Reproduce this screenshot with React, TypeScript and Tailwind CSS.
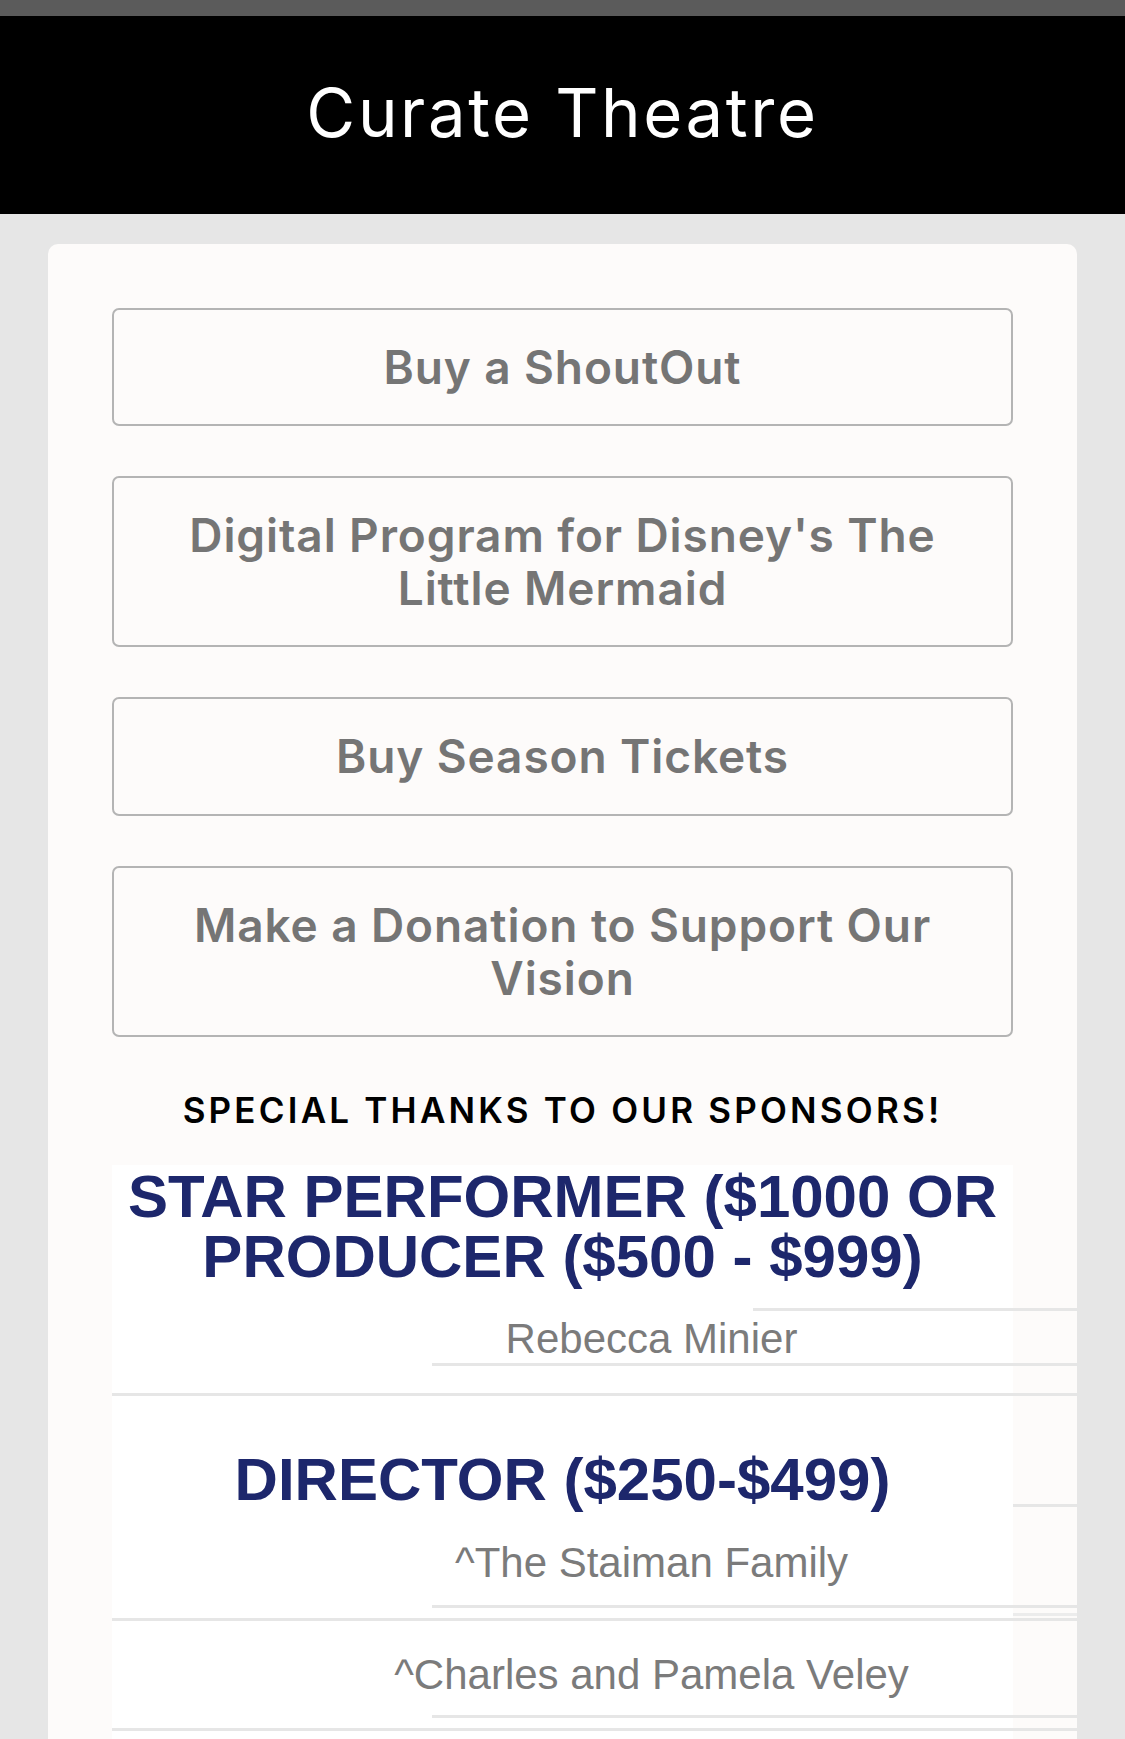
const buttons = [
  { label: "Buy a ShoutOut", h: "h-[118px]" },
  { label: "Digital Program for Disney's The Little Mermaid", h: "h-[171px]" },
  { label: "Buy Season Tickets", h: "h-[119px]" },
  { label: "Make a Donation to Support Our Vision", h: "h-[171px]" },
];

// a sponsor name, centred a little right of the column
function SponsorName({ name, pad }: { name: string; pad: string }) {
  return (
    <div className="bg-white">
      <div className={`-mr-[64px] ml-[114px] flex justify-center ${pad}`}>
        <span className="whitespace-nowrap text-[42px] leading-[50px] text-[#7b7b7b]">{name}</span>
      </div>
    </div>
  );
}

function Rule({ from }: { from?: string }) {
  return (
    <div className="bg-white">
      <div className={`${from ?? ""} -mr-[64px] h-[3px] bg-[#e6e6e6]`} />
    </div>
  );
}

export default function App() {
  return (
    <div className="min-h-screen w-[1125px] bg-[#e6e6e6] font-['Inter',sans-serif]">
      <div className="h-[16px] bg-[#5b5b5b]" />
      <header className="flex h-[198px] items-center justify-center bg-black pb-[5px]">
        <h1 className="text-[67px] leading-none tracking-[2.6px] text-white">Curate Theatre</h1>
      </header>

      <main className="mx-[48px] mt-[30px] rounded-[10px] bg-[#fdfbfa] px-16 pt-[64px] pb-[20px]">
        <div className="flex flex-col gap-[50px]">
          {buttons.map((b) => (
            <a
              key={b.label}
              className={`flex ${b.h} items-center justify-center rounded-[7px] border-[2.5px] border-[#b4b4b4] px-[50px] text-center text-[46px] font-semibold leading-[53px] tracking-[0.9px] text-[#757575]`}
            >
              {b.label}
            </a>
          ))}
        </div>

        <p className="mt-[51px] text-center text-[35px] font-semibold leading-[44px] tracking-[3.2px] text-black">
          SPECIAL THANKS TO OUR SPONSORS!
        </p>

        <section className="mt-[33px] font-['Liberation_Sans',Arial,sans-serif]">
          {/* star performer / producer */}
          <div className="bg-white pt-[2px]">
            <h2 className="text-center text-[60px] font-bold leading-[60px] text-[#1d276c]">
              STAR PERFORMER ($1000 OR PRODUCER ($500 - $999)
            </h2>
            <div className="flex h-[24px] items-end">
              <div className="ml-[641px] -mr-[64px] h-[3px] flex-1 bg-[#e6e6e6]" />
            </div>
          </div>
          <SponsorName name="Rebecca Minier" pad="h-[52px] pt-[3px]" />
          <Rule from="ml-[320px]" />
          <div className="h-[27px] bg-white" />
          <Rule />

          {/* director */}
          <div className="-mr-[64px] flex">
            <h2 className="flex-1 bg-white pt-[54px] text-center text-[60px] font-bold leading-[60px] text-[#1d276c]">
              DIRECTOR ($250-$499)
            </h2>
            <div className="flex w-[64px] flex-col justify-end pb-[3px]">
              <div className="h-[3px] bg-[#e6e6e6]" />
            </div>
          </div>
          <SponsorName name="^The Staiman Family" pad="h-[95px] pt-[28px]" />
          <Rule from="ml-[320px]" />
          <div className="-mr-[64px] flex h-[10px]">
            <div className="flex-1 bg-white" />
            <div className="mt-[5px] h-[3px] w-[64px] bg-[#ececec]" />
          </div>
          <Rule />
          <SponsorName name="^Charles and Pamela Veley" pad="h-[94px] pt-[29px]" />
          <Rule from="ml-[320px]" />
          <div className="h-[10px] bg-white" />
          <Rule />
          <div className="h-[200px] bg-white" />
        </section>
      </main>
    </div>
  );
}
